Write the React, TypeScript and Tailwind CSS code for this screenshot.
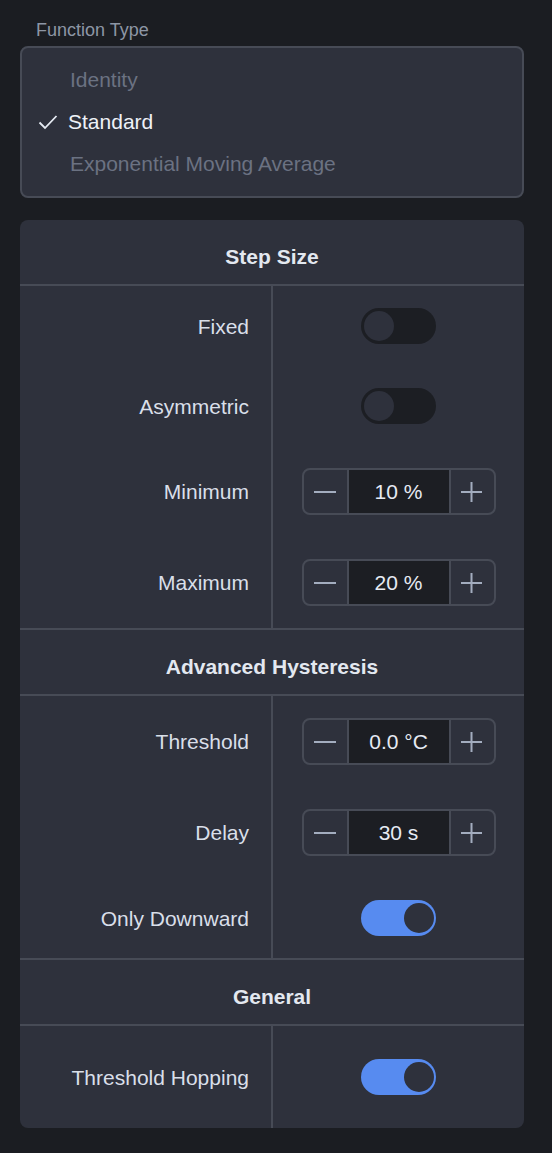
import React from "react";

const font = { fontFamily: "'Liberation Sans', Arial, sans-serif" };

function Toggle({ on }: { on: boolean }) {
  return (
    <div
      className={
        "relative h-[36px] w-[75px] rounded-full " +
        (on ? "bg-[#578bf0]" : "bg-[#1c1e23]")
      }
    >
      <div
        className={
          "absolute top-[3px] h-[30px] w-[30px] rounded-full bg-[#2e313c] " +
          (on ? "right-[2px]" : "left-[3px]")
        }
      />
    </div>
  );
}

function Stepper({ value }: { value: string }) {
  return (
    <div className="flex h-[47px] w-[194px] overflow-hidden rounded-lg border-2 border-[#474b56]">
      <div className="flex w-[45px] items-center justify-center border-r-2 border-[#474b56]">
        <svg width="22" height="22" viewBox="0 0 22 22">
          <line x1="0" y1="11" x2="22" y2="11" stroke="#a3adbf" strokeWidth="2" />
        </svg>
      </div>
      <div className="flex flex-1 items-center justify-center bg-[#1c1e23] text-[21px] text-[#e6ebf3]">
        {value}
      </div>
      <div className="flex w-[45px] items-center justify-center border-l-2 border-[#474b56]">
        <svg width="22" height="22" viewBox="0 0 22 22">
          <line x1="0" y1="11" x2="21" y2="11" stroke="#a3adbf" strokeWidth="2" />
          <line x1="10.5" y1="1" x2="10.5" y2="21" stroke="#a3adbf" strokeWidth="2" />
        </svg>
      </div>
    </div>
  );
}

function Row({
  label,
  children,
  last,
}: {
  label: string;
  children: React.ReactNode;
  last?: boolean;
}) {
  return (
    <div className="grid grid-cols-[251px_2px_251px]">
      <div
        className={
          "flex items-center justify-end pr-[22px] text-[21px] leading-none text-[#d9dfe9] " +
          (last ? "py-[33px]" : "py-[22px]")
        }
      >
        {label}
      </div>
      <div className="bg-[#474b56]" />
      <div
        className={
          "flex items-center justify-center " + (last ? "py-[33px]" : "py-[22px]")
        }
      >
        {children}
      </div>
    </div>
  );
}

function Header({ title, first }: { title: string; first?: boolean }) {
  return (
    <>
      {!first && <div className="h-[2px] bg-[#474b56]" />}
      <div className="flex h-16 items-center justify-center pt-[10px] text-[21px] font-bold text-[#e3e8f0]">
        {title}
      </div>
      <div className="h-[2px] bg-[#474b56]" />
    </>
  );
}

export default function App() {
  return (
    <div className="min-h-screen bg-[#1b1d22] pb-[25px] pt-[18px]" style={font}>
      <div className="ml-5 w-[504px]">
        <div className="pl-4 text-[18px] leading-6 text-[#8d96a5]">Function Type</div>
        <div className="mt-1 rounded-lg border-2 border-[#474b56] bg-[#2e313c] py-[11px]">
          {[
            { t: "Identity", sel: false },
            { t: "Standard", sel: true },
            { t: "Exponential Moving Average", sel: false },
          ].map((o) => (
            <div
              key={o.t}
              className={
                "relative flex h-[42px] items-center text-[21px] " +
                (o.sel ? "pl-[46px] text-[#eef2f8]" : "pl-[48px] text-[#6b7282]")
              }
            >
              {o.sel && (
                <svg
                  className="absolute left-[16px] top-[13px]"
                  width="20"
                  height="16"
                  viewBox="0 0 20 16"
                  fill="none"
                >
                  <path d="M1.5 8.5 L7 14 L18.5 2" stroke="#e6ebf3" strokeWidth="1.8" />
                </svg>
              )}
              {o.t}
            </div>
          ))}
        </div>

        <div className="mt-[22px] overflow-hidden rounded-lg bg-[#2e313c]">
          <Header title="Step Size" first />
          <Row label="Fixed">
            <Toggle on={false} />
          </Row>
          <Row label="Asymmetric">
            <Toggle on={false} />
          </Row>
          <Row label="Minimum">
            <Stepper value="10 %" />
          </Row>
          <Row label="Maximum">
            <Stepper value="20 %" />
          </Row>
          <Header title="Advanced Hysteresis" />
          <Row label="Threshold">
            <Stepper value="0.0 °C" />
          </Row>
          <Row label="Delay">
            <Stepper value="30 s" />
          </Row>
          <Row label="Only Downward">
            <Toggle on />
          </Row>
          <Header title="General" />
          <Row label="Threshold Hopping" last>
            <Toggle on />
          </Row>
        </div>
      </div>
    </div>
  );
}
